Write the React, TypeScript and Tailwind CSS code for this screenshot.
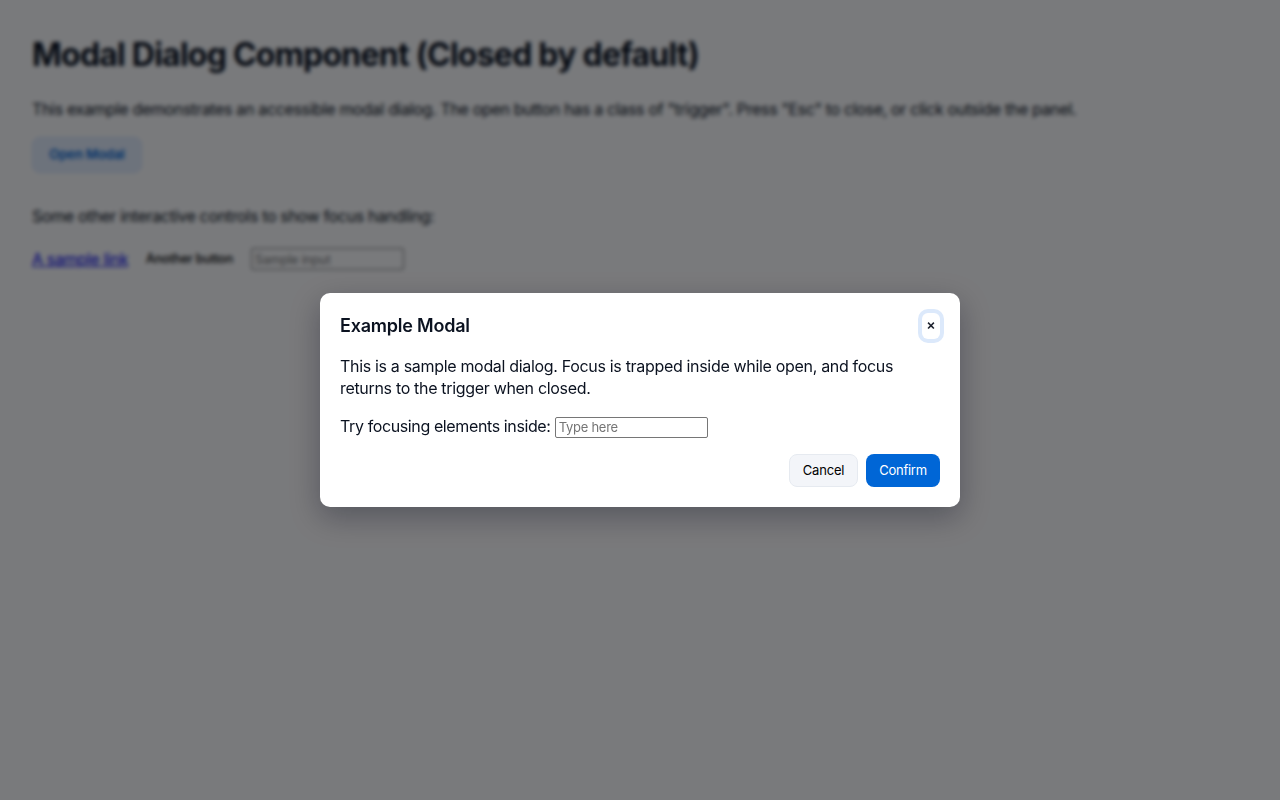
export default function App() {
  return (
    <div className="relative h-[800px] w-full overflow-hidden bg-white font-['Inter',sans-serif] text-[#0b1220]">
      {/* Page behind the modal */}
      <main className="p-8">
        <h1 className="mb-[19px] text-[32px] font-bold leading-[46px] tracking-[-0.024em]">Modal Dialog Component (Closed by default)</h1>
        <p className="mb-4 text-[16px] leading-[24px] tracking-[-0.021em]">
          This example demonstrates an accessible modal dialog. The open button has a class of "trigger". Press "Esc" to close, or click outside the panel.
        </p>
        <button className="h-9 w-[110px] rounded-lg border border-[#d5e5fa] bg-[#e6f0ff] text-[13px] font-semibold tracking-[-0.005em] text-[#0066d6]">
          Open Modal
        </button>
        <p className="mt-[31px] text-[16px] leading-[24px] tracking-[-0.021em]">Some other interactive controls to show focus handling:</p>
        <div className="mt-[19px] flex items-center">
          <a href="#" className="text-[16px] leading-[24px] tracking-[-0.021em] text-[#0000ee] underline">A sample link</a>
          <button className="mx-[18px] text-[12.5px] font-medium tracking-[-0.015em] text-black">Another button</button>
          <input placeholder="Sample input" className="h-[22px] w-[153px] rounded-[2px] border border-[#767676] px-[3px] text-[12.5px] tracking-[-0.01em] placeholder:text-[#757575]" />
        </div>
      </main>

      {/* Overlay */}
      <div className="absolute inset-0 flex items-center justify-center bg-[rgba(0,2,5,0.525)] backdrop-blur-[2px]">
        <div className="w-[640px] rounded-[10px] bg-white p-5 shadow-[0_10px_30px_rgba(2,6,23,0.3)]">
          <div className="flex items-center justify-between">
            <h2 className="text-[18px] font-semibold leading-[22px] tracking-[-0.012em]">Example Modal</h2>
            <button className="flex h-[26px] w-[18px] items-center justify-center rounded-md pb-0.5 text-[14px] font-semibold leading-none text-[#1a1f2b] shadow-[0_0_0_4px_#dce9fb]">
              ×
            </button>
          </div>
          <p className="mt-4 text-[16px] leading-[22px] tracking-[-0.02em]">
            This is a sample modal dialog. Focus is trapped inside while open, and focus returns to the trigger when closed.
          </p>
          <p className="mt-4 text-[16px] leading-[22px] tracking-[-0.024em]">
            Try focusing elements inside:{" "}
            <input placeholder="Type here" className="h-[21px] w-[153px] rounded-[2px] border border-[#767676] px-[3px] text-[13px] tracking-[-0.02em] placeholder:text-[#757575]" />
          </p>
          <div className="mt-4 flex justify-end gap-2">
            <button className="h-[33px] w-[69px] rounded-lg border border-[#e6eaf0] bg-[#f3f5f9] text-[13px] tracking-[-0.015em] text-black">Cancel</button>
            <button className="h-[33px] w-[74px] rounded-lg bg-[#0066d6] text-[13px] tracking-[-0.02em] text-white">Confirm</button>
          </div>
        </div>
      </div>
    </div>
  );
}
